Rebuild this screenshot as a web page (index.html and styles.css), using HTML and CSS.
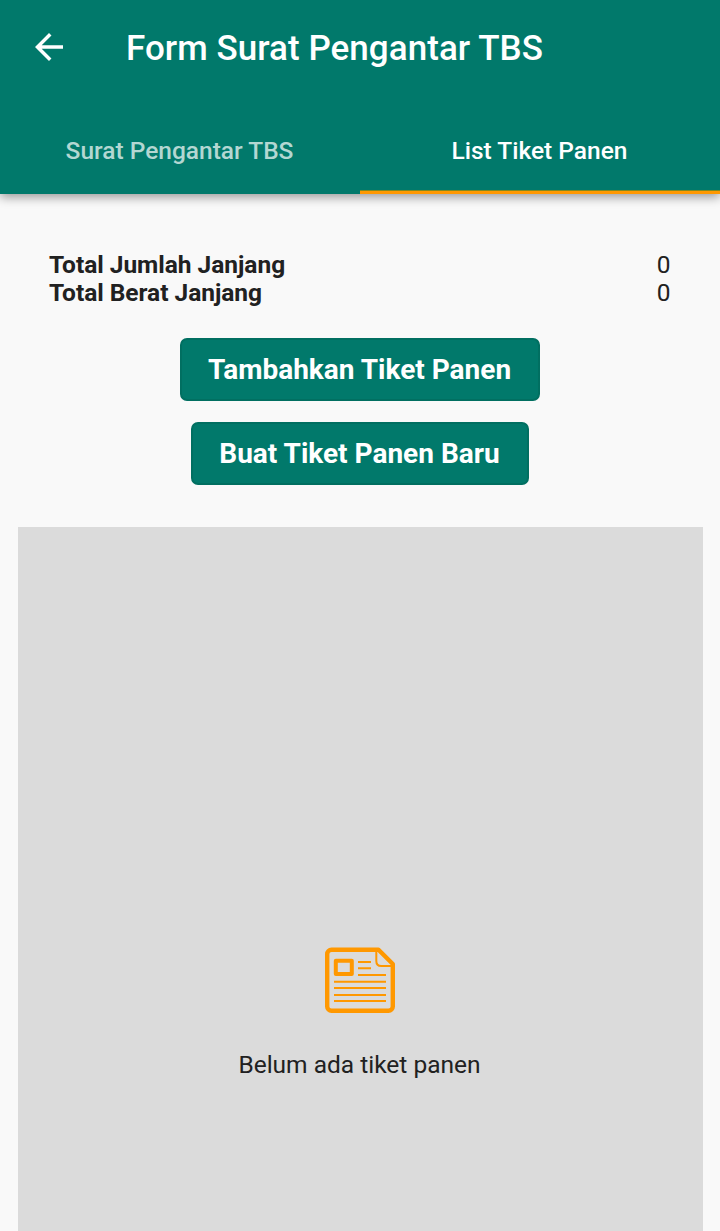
FILE: index.html
```html
<!DOCTYPE html>
<html lang="id">
<head>
<meta charset="utf-8">
<title>Form Surat Pengantar TBS</title>
<link rel="stylesheet" href="styles.css">
</head>
<body>
<header class="appbar">
  <div class="toolbar">
    <svg class="back" viewBox="4 4 16 16"><path d="M20 11H7.83l5.59-5.59L12 4l-8 8 8 8 1.41-1.41L7.83 13H20v-2z"/></svg>
    <h1 class="title">Form Surat Pengantar TBS</h1>
  </div>
  <nav class="tabs">
    <a class="tab">Surat Pengantar TBS</a>
    <a class="tab active">List Tiket Panen</a>
  </nav>
</header>
<main class="content">
  <dl class="totals">
    <div class="row"><dt>Total Jumlah Janjang</dt><dd>0</dd></div>
    <div class="row"><dt>Total Berat Janjang</dt><dd>0</dd></div>
  </dl>
  <button class="btn add">Tambahkan Tiket Panen</button>
  <button class="btn create">Buat Tiket Panen Baru</button>
  <section class="empty">
    <svg class="ticket" viewBox="0 0 70 66">
      <path class="outline" d="M6.5 2.8H53.5L67.8 17V59.5a4.3 4.3 0 0 1-4.3 4.3H6.5a4.3 4.3 0 0 1-4.3-4.3V7.1a4.3 4.3 0 0 1 4.3-4.3z"/>
      <path class="fold" d="M51.3 4v10q0 5 5 5h11"/>
      <rect class="photo" x="10.8" y="13.8" width="16" height="13.2"/>
      <path class="lines" d="M33 15H46M33 21.2H46M33 28H61M9 34.7H61M9 41.1H61M9 48H61M9 54.1H61"/>
    </svg>
    <p class="message">Belum ada tiket panen</p>
  </section>
</main>
</body>
</html>
```

FILE: styles.css
```css
* { box-sizing: border-box; }
body { margin: 0; height: 1231px; overflow: hidden; display: flex; flex-direction: column; background: #f9f9f9; color: #212121; font-family: Roboto, sans-serif; }
.appbar { position: relative; height: 194px; background: #01796b; color: #fff; box-shadow: 0 3px 10px rgba(0,0,0,.4); flex: none; }
.toolbar { height: 96px; display: flex; align-items: center; padding-left: 35px; }
.back { width: 28px; height: 28px; fill: #fff; margin-top: -2px; }
.title { margin: 2px 0 0 63px; font-size: 35px; font-weight: 500; line-height: 42px; letter-spacing: .04px; white-space: nowrap; }
.tabs { height: 98px; display: flex; }
.tab { flex: 1; display: flex; align-items: center; justify-content: center; padding: 11px 1px 0 0; font-size: 24.5px; font-weight: 500; color: #b3d7d2; white-space: nowrap; }
.active { color: #fff; box-shadow: inset 0 -3px #ff9800, inset 0 -4px #80881f; }
.content { flex: 1; display: flex; flex-direction: column; align-items: center; padding: 57px 17.5px 0; }
.totals { width: 100%; margin: 0 0 30.5px; padding: 0 32px 0 31.5px; font-size: 24.5px; line-height: 28px; }
.row { display: flex; justify-content: space-between; }
dt { font-weight: 700; letter-spacing: -.03px; }
dd { margin: 0; }
.btn { height: 63px; flex: none; padding: 1px 1px 0 0; border: 2px solid #016f61; border-radius: 7px; background: #01796b; color: #fff; font: 700 28px Roboto, sans-serif; white-space: nowrap; }
.add { width: 360px; margin-bottom: 21px; }
.create { width: 338px; margin-bottom: 42px; }
.empty { flex: 1; width: 685px; padding-top: 420.5px; background: #dbdbdb; display: flex; flex-direction: column; align-items: center; }
.ticket { width: 70px; height: 66px; fill: none; stroke: #ff9800; flex: none; }
.outline { stroke-width: 4.4; stroke-linejoin: round; }
.fold { stroke-width: 2; }
.photo { stroke-width: 4; stroke-linejoin: round; }
.lines { stroke-width: 2; stroke-linecap: butt; }
.message { margin: 38px 1px 0 0; font-size: 24.5px; line-height: 28px; white-space: nowrap; }
```
